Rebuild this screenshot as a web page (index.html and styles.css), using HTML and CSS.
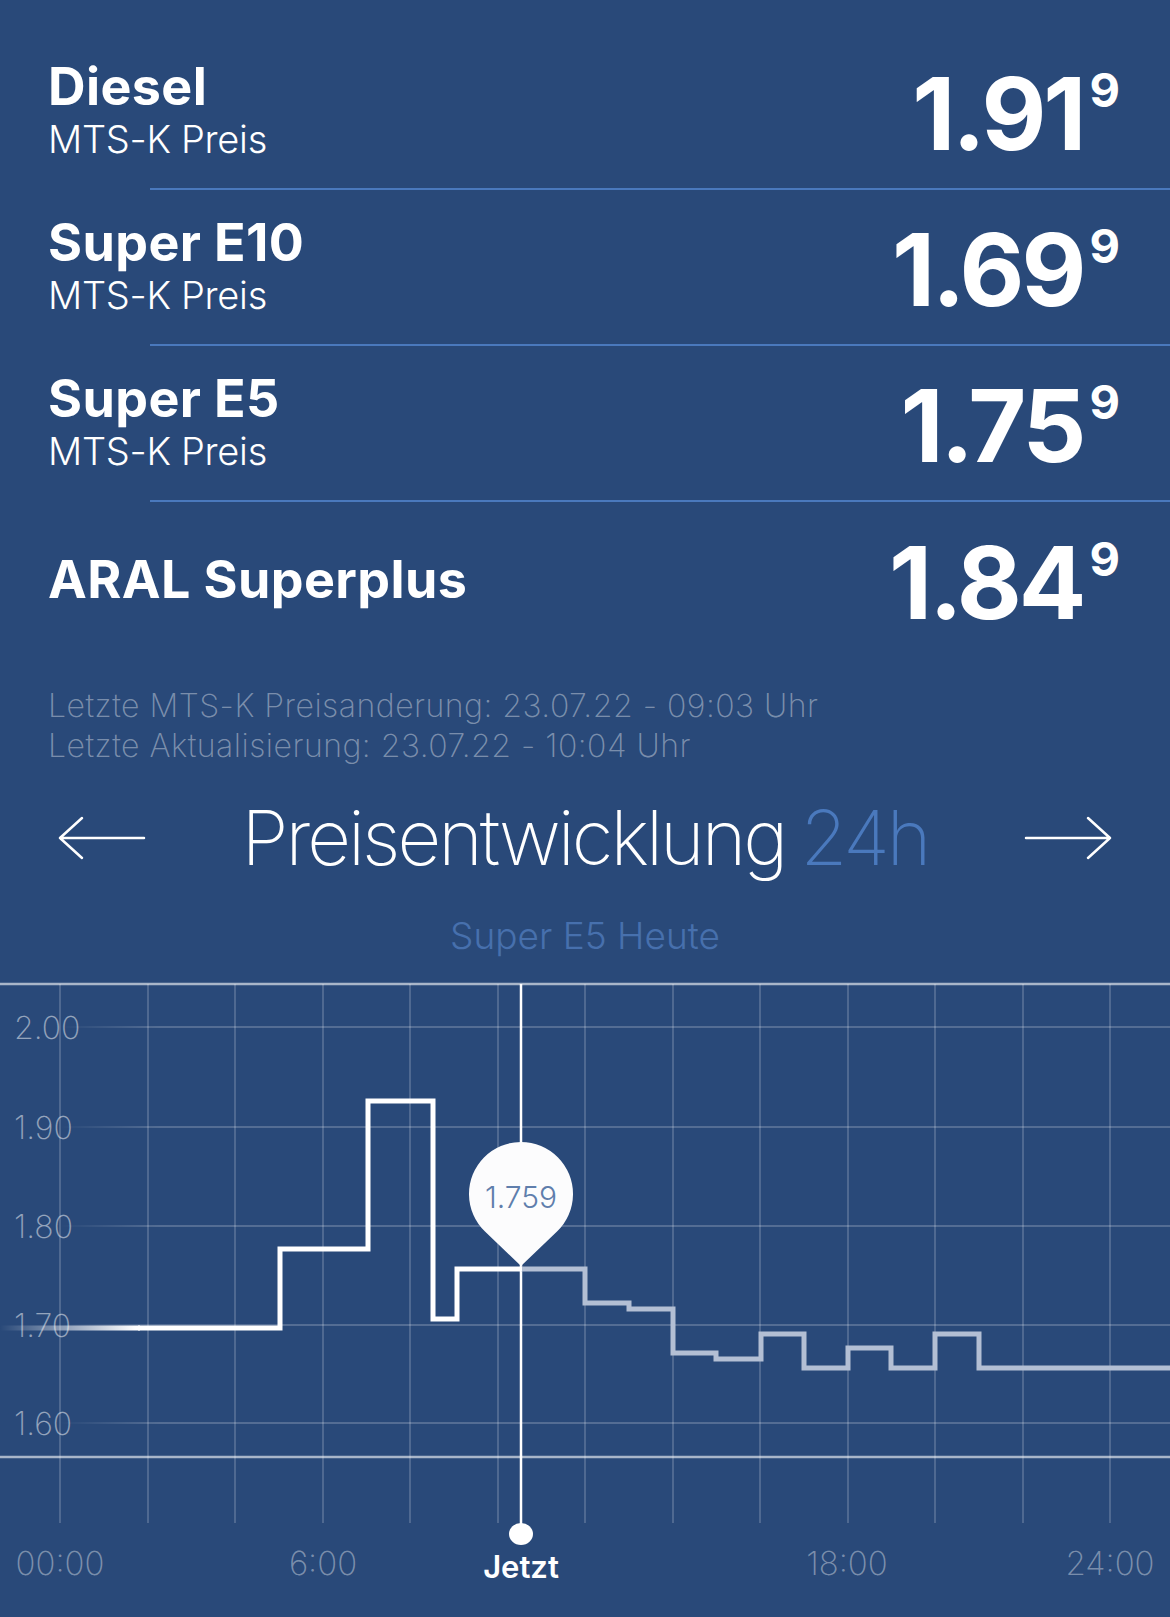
FILE: index.html
```html
<!DOCTYPE html>
<html lang="de">
<head>
<meta charset="utf-8">
<title>Preise</title>
<link rel="stylesheet" href="styles.css">
</head>
<body>
<main class="page">
  <section class="rows">
    <div class="row">
      <div class="fuel"><div class="name">Diesel</div><div class="sub">MTS-K Preis</div></div>
      <div class="price">1.91<sup class="tenth">9</sup></div>
    </div>
    <div class="row">
      <div class="fuel"><div class="name">Super E10</div><div class="sub">MTS-K Preis</div></div>
      <div class="price">1.69<sup class="tenth">9</sup></div>
    </div>
    <div class="row">
      <div class="fuel"><div class="name">Super E5</div><div class="sub">MTS-K Preis</div></div>
      <div class="price">1.75<sup class="tenth">9</sup></div>
    </div>
    <div class="row row-last">
      <div class="fuel"><div class="name">ARAL Superplus</div></div>
      <div class="price">1.84<sup class="tenth">9</sup></div>
    </div>
  </section>

  <section class="updates">
    <p>Letzte MTS-K Preisanderung: 23.07.22 - 09:03 Uhr</p>
    <p>Letzte Aktualisierung: 23.07.22 - 10:04 Uhr</p>
  </section>

  <section class="trend-head">
    <svg class="arrow" width="88" height="48" viewBox="0 0 88 48"><path d="M2 24 H86 M2 24 L24 4 M2 24 L24 44" fill="none" stroke="#fff" stroke-width="2.5" stroke-linecap="round"/></svg>
    <h2 class="trend-title">Preisentwicklung <span class="accent">24h</span></h2>
    <svg class="arrow" width="88" height="48" viewBox="0 0 88 48"><path d="M2 24 H86 M86 24 L64 4 M86 24 L64 44" fill="none" stroke="#fff" stroke-width="2.5" stroke-linecap="round"/></svg>
  </section>
  <div class="trend-sub">Super E5 Heute</div>

  <svg class="chart" width="1170" height="647" viewBox="0 970 1170 647">
    <defs>
      <linearGradient id="hfade" gradientUnits="userSpaceOnUse" x1="60" y1="0" x2="160" y2="0">
        <stop offset="0" stop-color="#fff" stop-opacity="0"/>
        <stop offset="1" stop-color="#fff" stop-opacity="0.2"/>
      </linearGradient>
      <linearGradient id="lfade" gradientUnits="userSpaceOnUse" x1="0" y1="0" x2="135" y2="0">
        <stop offset="0" stop-color="#fff" stop-opacity="0"/>
        <stop offset="1" stop-color="#fff" stop-opacity="1"/>
      </linearGradient>
    </defs>
    <g class="vgrid">
      <line x1="60" y1="984" x2="60" y2="1523"/>
      <line x1="148" y1="984" x2="148" y2="1523"/>
      <line x1="235" y1="984" x2="235" y2="1523"/>
      <line x1="323" y1="984" x2="323" y2="1523"/>
      <line x1="410" y1="984" x2="410" y2="1523"/>
      <line x1="498" y1="984" x2="498" y2="1523"/>
      <line x1="585" y1="984" x2="585" y2="1523"/>
      <line x1="673" y1="984" x2="673" y2="1523"/>
      <line x1="760" y1="984" x2="760" y2="1523"/>
      <line x1="848" y1="984" x2="848" y2="1523"/>
      <line x1="935" y1="984" x2="935" y2="1523"/>
      <line x1="1023" y1="984" x2="1023" y2="1523"/>
      <line x1="1110" y1="984" x2="1110" y2="1523"/>
    </g>
    <g class="hgrid" stroke="url(#hfade)">
      <line x1="60" y1="1027" x2="1170" y2="1027"/>
      <line x1="60" y1="1127" x2="1170" y2="1127"/>
      <line x1="60" y1="1226" x2="1170" y2="1226"/>
      <line x1="60" y1="1325" x2="1170" y2="1325"/>
      <line x1="60" y1="1423" x2="1170" y2="1423"/>
    </g>
    <line class="frame" x1="0" y1="984" x2="1170" y2="984"/>
    <line class="frame" x1="0" y1="1457" x2="1170" y2="1457"/>
    <g class="ylab">
      <text x="14" y="1027">2.00</text>
      <text x="14" y="1127">1.90</text>
      <text x="14" y="1226">1.80</text>
      <text x="14" y="1325">1.70</text>
      <text x="14" y="1423">1.60</text>
    </g>
    <line class="now" x1="521" y1="984" x2="521" y2="1534"/>
    <polyline class="future" points="521,1269 585,1269 585,1303 629,1303 629,1309 673,1309 673,1353 716,1353 716,1359 761,1359 761,1334 804,1334 804,1368 848,1368 848,1348 891,1348 891,1368 935,1368 935,1334 979,1334 979,1368 1170,1368"/>
    <polyline class="past fade" points="0,1328 140,1328"/>
    <polyline class="past" points="138,1328 280,1328 280,1249 368,1249 368,1101 433,1101 433,1319 457,1319 457,1269 522,1269"/>
    <path class="pin" d="M521 1266 L485 1231.5 A52 52 0 1 1 557 1231.5 Z"/>
    <text class="pin-text" x="521" y="1208">1.759</text>
    <ellipse class="dot" cx="521" cy="1534" rx="12" ry="11"/>
    <g class="xlab">
      <text x="60" y="1575">00:00</text>
      <text x="323" y="1575">6:00</text>
      <text x="847" y="1575">18:00</text>
      <text x="1110" y="1575">24:00</text>
    </g>
    <text class="jetzt" x="521" y="1578">Jetzt</text>
  </svg>
</main>
</body>
</html>
```

FILE: styles.css
```css
html, body {
  margin: 0;
  padding: 0;
  background: #294979;
}
body {
  width: 1170px;
  height: 1617px;
  overflow: hidden;
  font-family: "Inter", "Roboto", "Liberation Sans", sans-serif;
  color: #fff;
}
.page {
  display: flex;
  flex-direction: column;
}
.rows {
  padding-top: 34px;
  display: flex;
  flex-direction: column;
}
.row {
  height: 154px;
  display: flex;
  align-items: center;
  justify-content: space-between;
  padding-right: 50px;
  border-bottom: 2px solid #4a79bd;
  margin-left: 150px;
}
.row .fuel {
  margin-left: -102px;
}
.row-last {
  border-bottom: none;
  height: 156px;
}
.fuel {
  display: flex;
  flex-direction: column;
}
.name {
  font-weight: 700;
  font-size: 52px;
  line-height: 56px;
  letter-spacing: 0.4px;
}
.sub {
  font-weight: 300;
  font-size: 38px;
  line-height: 48px;
  letter-spacing: -0.3px;
}
.price {
  font-weight: 700;
  font-size: 100px;
  line-height: 100px;
  letter-spacing: -3px;
  display: flex;
  align-items: flex-start;
  padding-top: 5px;
}
.tenth {
  font-size: 47px;
  line-height: 46px;
  vertical-align: baseline;
  margin-left: 6px;
  margin-top: 3px;
  letter-spacing: 0;
}
.updates {
  margin-top: 28px;
  padding-left: 48px;
}
.updates p {
  margin: 0;
  font-weight: 200;
  font-size: 32px;
  line-height: 40px;
  letter-spacing: 0.5px;
  color: rgba(255, 255, 255, 0.4);
}
.trend-head {
  margin-top: 22px;
  height: 100px;
  display: flex;
  align-items: center;
  justify-content: space-between;
  padding: 0 58px;
}
.arrow {
  display: block;
}
.trend-title {
  margin: 0;
  font-weight: 200;
  font-size: 76px;
  line-height: 100px;
  letter-spacing: -3px;
  word-spacing: -3px;
  color: #fff;
  position: relative;
  top: -1px;
}
.accent {
  color: #4a79bd;
}
.trend-sub {
  margin-top: 23px;
  text-align: center;
  font-weight: 300;
  font-size: 37px;
  line-height: 50px;
  color: #4770ad;
  height: 50px;
}
.chart {
  display: block;
  margin-top: 9px;
}
.vgrid line {
  stroke: rgba(255, 255, 255, 0.3);
  stroke-width: 1.2;
}
.hgrid line {
  stroke-width: 2;
}
.frame {
  stroke: rgba(255, 255, 255, 0.6);
  stroke-width: 2.5;
}
.ylab text {
  font-family: "Inter", "Roboto", sans-serif;
  font-weight: 200;
  font-size: 32px;
  fill: rgba(255, 255, 255, 0.5);
  dominant-baseline: central;
}
.now {
  stroke: #fff;
  stroke-width: 2.5;
}
.past {
  fill: none;
  stroke: #fff;
  stroke-width: 5;
}
.past.fade {
  stroke: url(#lfade);
}
.future {
  fill: none;
  stroke: #b3bfd4;
  stroke-width: 5;
}
.pin {
  fill: #fcfcfd;
}
.pin-text {
  font-family: "Inter", "Roboto", sans-serif;
  font-weight: 300;
  font-size: 30px;
  fill: #5f7eac;
  text-anchor: middle;
}
.dot {
  fill: #fff;
}
.xlab text {
  font-family: "Inter", "Roboto", sans-serif;
  font-weight: 200;
  font-size: 33px;
  fill: rgba(255, 255, 255, 0.4);
  text-anchor: middle;
}
.jetzt {
  font-family: "Inter", "Roboto", sans-serif;
  font-weight: 600;
  font-size: 31px;
  fill: #fff;
  text-anchor: middle;
}
```
